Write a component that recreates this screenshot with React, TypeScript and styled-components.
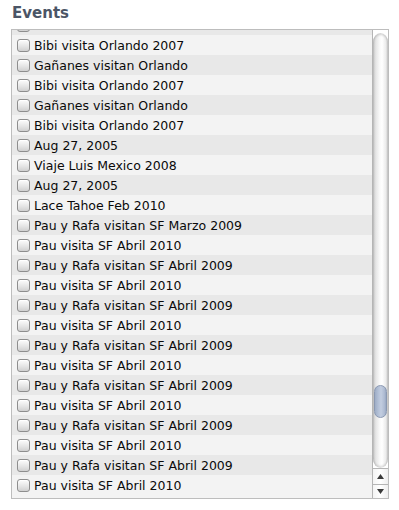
import {useState} from 'react';
import styled, {createGlobalStyle} from 'styled-components';

const GlobalStyle = createGlobalStyle`
  html, body {
    margin: 0;
    padding: 0;
    background: #ffffff;
  }
  body {
    font-family: 'DejaVu Sans', 'Liberation Sans', sans-serif;
  }
`;

const eventNames = [
  'Gañanes visitan Orlando',
  'Bibi visita Orlando 2007',
  'Gañanes visitan Orlando',
  'Bibi visita Orlando 2007',
  'Gañanes visitan Orlando',
  'Bibi visita Orlando 2007',
  'Aug 27, 2005',
  'Viaje Luis Mexico 2008',
  'Aug 27, 2005',
  'Lace Tahoe Feb 2010',
  'Pau y Rafa visitan SF Marzo 2009',
  'Pau visita SF Abril 2010',
  'Pau y Rafa visitan SF Abril 2009',
  'Pau visita SF Abril 2010',
  'Pau y Rafa visitan SF Abril 2009',
  'Pau visita SF Abril 2010',
  'Pau y Rafa visitan SF Abril 2009',
  'Pau visita SF Abril 2010',
  'Pau y Rafa visitan SF Abril 2009',
  'Pau visita SF Abril 2010',
  'Pau y Rafa visitan SF Abril 2009',
  'Pau visita SF Abril 2010',
  'Pau y Rafa visitan SF Abril 2009',
  'Pau visita SF Abril 2010',
];

const App: React.FC = () => {
  const [checked, setChecked] = useState<number[]>([]);

  const toggle = (index: number) => {
    setChecked(prev =>
      prev.includes(index) ? prev.filter(i => i !== index) : [...prev, index],
    );
  };

  return (
    <Page>
      <GlobalStyle />
      <Heading>Events</Heading>
      <ListBox>
        <Viewport>
          <Rows>
            {eventNames.map((name, index) => (
              <Row key={index} $odd={index % 2 === 1} onClick={() => toggle(index)}>
                <Check $on={checked.includes(index)} />
                <Label>{name}</Label>
              </Row>
            ))}
          </Rows>
        </Viewport>
        <ScrollBar>
          <Track>
            <Thumb />
          </Track>
          <ArrowBtn>
            <svg width="7" height="5" viewBox="0 0 7 5">
              <path d="M3.5 0 L7 5 L0 5 Z" fill="#3a3a3a" />
            </svg>
          </ArrowBtn>
          <ArrowBtn $last>
            <svg width="7" height="5" viewBox="0 0 7 5">
              <path d="M0 0 L7 0 L3.5 5 Z" fill="#3a3a3a" />
            </svg>
          </ArrowBtn>
        </ScrollBar>
      </ListBox>
    </Page>
  );
};

const Page = styled.div`
  display: flex;
  flex-direction: column;
  padding: 4px 0 0 11px;
  width: 378px;
`;

const Heading = styled.div`
  font-family: 'DejaVu Sans', 'Liberation Sans', sans-serif;
  font-weight: bold;
  font-size: 15px;
  line-height: 18px;
  color: #4b5566;
  padding-left: 1px;
  margin-bottom: 7px;
`;

const ListBox = styled.div`
  display: flex;
  height: 468px;
  border: 1px solid #bdbdbd;
  background: #f3f3f3;
`;

const Viewport = styled.div`
  flex: 1;
  overflow: hidden;
`;

const Rows = styled.ul`
  list-style: none;
  margin: -15px 0 0 0;
  padding: 0;
`;

const Row = styled.li<{$odd: boolean}>`
  display: flex;
  align-items: center;
  height: 20px;
  padding-left: 5px;
  background: ${p => (p.$odd ? '#f3f3f3' : '#e8e8e8')};
  cursor: default;
`;

const Check = styled.span<{$on: boolean}>`
  display: block;
  box-sizing: border-box;
  width: 13px;
  height: 13px;
  border: 1px solid #8e8e8e;
  border-radius: 3px;
  background: linear-gradient(#fdfdfd, #e6e6e6 55%, #d0d0d0);
  box-shadow: inset 0 1px 1px rgba(255, 255, 255, 0.9);
  margin-right: 4px;
`;

const Label = styled.span`
  font-family: 'DejaVu Sans', 'Liberation Sans', sans-serif;
  font-size: 12.5px;
  color: #0a0a0a;
  white-space: nowrap;
`;

const ScrollBar = styled.div`
  display: flex;
  flex-direction: column;
  width: 15px;
  border-left: 1px solid #b5b5b5;
  background: #ffffff;
`;

const Track = styled.div`
  flex: 1;
  display: flex;
  flex-direction: column;
  padding-top: 352px;
  align-items: center;
  border-radius: 8px 8px 8px 8px / 10px 10px 10px 10px;
  margin-top: 3px;
  background: linear-gradient(
    to right,
    #c9c9c9,
    #e6e6e6 20%,
    #f9f9f9 45%,
    #ffffff 60%,
    #ececec 85%,
    #d2d2d2
  );
  box-shadow: inset 0 2px 2px rgba(0, 0, 0, 0.15), inset 0 -2px 2px rgba(0, 0, 0, 0.12);
`;

const Thumb = styled.div`
  box-sizing: border-box;
  width: 13px;
  height: 33px;
  border-radius: 7px;
  border: 1px solid #8b99b2;
  background: linear-gradient(
    to right,
    #9eadc6,
    #b6c3d9 35%,
    #c2cde0 55%,
    #aebbd2 85%,
    #98a8c2
  );
`;

const ArrowBtn = styled.div<{$last?: boolean}>`
  display: flex;
  align-items: center;
  justify-content: center;
  height: ${p => (p.$last ? '13px' : '15px')};
  border-top: 1px solid #b5b5b5;
  background: linear-gradient(to right, #f4f4f4, #ffffff 50%, #eeeeee);
`;

export default App;
